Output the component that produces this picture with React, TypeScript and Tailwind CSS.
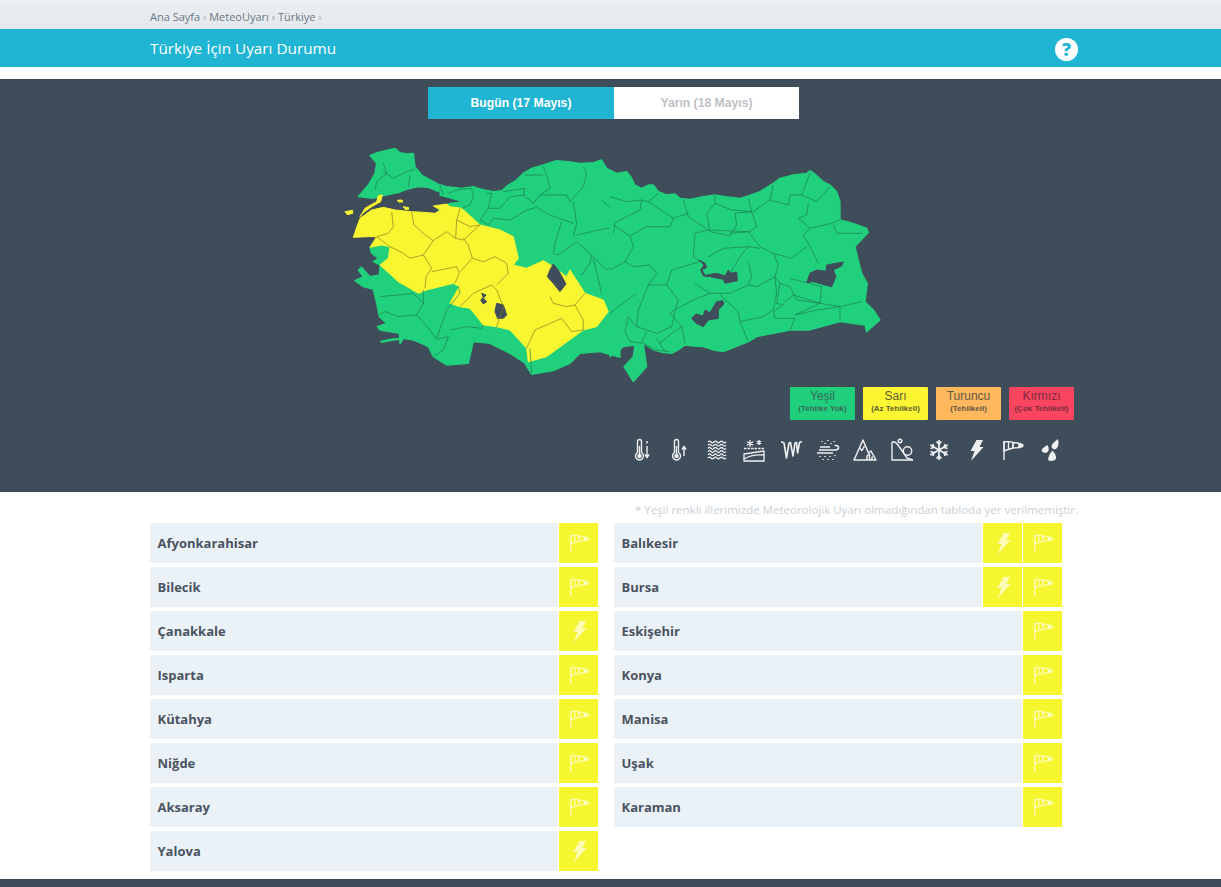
// Türkiye MeteoUyarı page
const LEFT = [
  { name: "Afyonkarahisar", icons: ["wind"] },
  { name: "Bilecik", icons: ["wind"] },
  { name: "Çanakkale", icons: ["bolt"] },
  { name: "Isparta", icons: ["wind"] },
  { name: "Kütahya", icons: ["wind"] },
  { name: "Niğde", icons: ["wind"] },
  { name: "Aksaray", icons: ["wind"] },
  { name: "Yalova", icons: ["bolt"] },
];

const RIGHT = [
  { name: "Balıkesir", icons: ["bolt", "wind"] },
  { name: "Bursa", icons: ["bolt", "wind"] },
  { name: "Eskişehir", icons: ["wind"] },
  { name: "Konya", icons: ["wind"] },
  { name: "Manisa", icons: ["wind"] },
  { name: "Uşak", icons: ["wind"] },
  { name: "Karaman", icons: ["wind"] },
];

// map paths use the 3x crop coordinates, the two groups below scale them back
const WEST_BORDERS_GREEN = [
  "M130,100 140,130 110,155 105,180",
  "M130,125 160,145 200,125 225,118",
  "M210,135 205,170",
  "M300,165 310,195",
  "M325,190 350,180 395,175 400,200 390,225 365,235",
  "M440,190 455,190 445,235 420,270 445,285 460,265 510,270 560,240 590,232 630,255 700,280",
  "M445,235 480,235 510,200 555,195",
  "M490,185 555,175 550,195 580,220 600,195 630,175 620,135 610,110",
  "M555,135 610,135",
  "M600,195 680,195 690,215 730,170 740,130 730,110",
  "M700,215 710,280 700,320",
  "M665,275 645,340 640,370 655,375 710,335 755,375 750,400 725,435",
  "M710,315 800,295 830,300",
  "M755,375 800,420 840,390",
  "M785,210 830,250 840,245",
  "M760,385 785,490",
  "M120,500 175,495 220,490 250,520 230,555 175,560 135,545 115,555",
  "M230,555 270,600 290,628 325,620",
  "M250,480 250,520",
  "M355,470 360,490 320,540 290,625",
  "M330,600 380,590 425,595 430,585",
  "M325,620 310,660 280,680",
  "M570,655 575,730",
];

const WEST_BORDERS_YELLOW = [
  "M155,245 160,290 145,310 110,320",
  "M215,245 222,285 250,310 280,332 320,305 347,325 350,270 360,235",
  "M110,320 150,350 190,370 210,385 250,375 280,332",
  "M250,375 275,415 258,440 255,475",
  "M347,325 370,330 420,285",
  "M350,270 390,290 420,285",
  "M370,325 385,345 397,385",
  "M275,425 350,410 358,430 345,460",
  "M397,385 360,425",
  "M397,385 430,395 465,380 500,400 505,430 470,465",
  "M360,530 400,490 455,465 470,480 490,530 470,590",
  "M560,655 585,600 620,585 665,565 695,605 730,600",
  "M630,500 640,520 680,530 705,525 735,490",
  "M705,525 730,570 730,600",
];

const EAST_BORDERS = [
  "M0,200 50,215 95,210 90,240 40,265 15,280 10,310",
  "M95,210 115,215 190,265 180,290 110,290 60,318 10,285",
  "M115,215 145,190",
  "M220,210 235,260 295,300",
  "M190,265 235,250",
  "M315,195 315,220 290,250 300,305 360,318 380,285 375,250 425,245 415,205",
  "M315,220 365,240 425,245 440,290 420,305 360,310",
  "M490,165 480,210 430,245",
  "M480,210 535,225 540,195 575,195 600,130",
  "M575,195 620,215 660,170",
  "M595,220 590,255 565,265 600,295 665,280 690,270",
  "M670,285 680,310 760,310",
  "M600,295 580,315 600,350 625,400",
  "M255,310 295,300 415,305 450,350 490,370 545,385 590,350",
  "M255,310 250,380 270,395",
  "M60,318 70,350 45,395 0,420",
  "M45,395 70,410 120,405 140,430 115,465 170,465 185,420 270,395",
  "M295,380 340,355 415,350 450,355",
  "M390,380 415,350",
  "M390,380 360,430",
  "M415,395 425,440 415,465 440,470 495,440 505,405 490,370",
  "M255,460 300,490 360,490 415,465",
  "M170,465 205,510 195,540 250,510 300,490",
  "M330,495 385,545 390,575 460,560 490,540 500,490 495,440",
  "M495,440 510,460 540,470 560,510 630,520 635,470 540,445",
  "M510,460 500,520 520,525 490,545 495,565 555,565 540,600",
  "M520,520 550,495 630,520 555,555 620,540 690,530 690,570",
  "M630,520 690,530 755,515",
  "M390,575 415,635",
  "M195,540 180,550 215,590 225,640",
  "M115,465 85,540 80,590 110,600 140,610 185,590 195,545",
  "M80,490 25,530 0,550",
  "M80,590 55,560 45,605 60,635 100,640 135,660 180,665",
  "M110,605 95,635",
  "M140,625 165,665",
  "M215,590 185,610 150,640",
];

const GREEN = "#20d07c";
const YELLOW = "#f9f530";
const DARK = "#3f4c5a";

function TurkeyMap() {
  return (
    <svg viewBox="340 130 550 255" className="ml-[340px] mt-[11px] block h-[255px] w-[550px]">
      <g transform="translate(340,130) scale(0.3333)">
        <g fill={GREEN} stroke={GREEN} strokeWidth="4" strokeLinejoin="round">
          <path d="M90,77 L112,68 135,62 165,55 180,68 200,72 220,70 225,110 245,135 272,150 300,165 296,185 265,172 235,170 200,178 175,188 130,197 100,205 55,200 70,182 85,165 105,130 110,100Z" />
          <path d="M302,165 320,170 340,172 365,175 400,170 425,178 460,185 485,182 505,165 530,150 550,130 575,115 610,105 650,92 690,96 720,100 760,98 785,90 800,115 840,135 840,682 780,665 720,670 690,700 640,722 575,733 555,700 510,670 450,640 400,635 385,700 320,705 280,680 265,650 220,630 190,625 180,642 178,610 120,600 112,590 140,580 118,560 110,520 100,478 70,470 45,452 70,440 55,420 65,412 90,440 118,435 120,405 100,395 115,385 95,370 90,352 125,345 200,300 300,245 295,235 330,220 370,215 300,195Z" />
          <path d="M122,634 150,628 176,625 176,628 150,632 125,637Z" />
        </g>
        <g fill={YELLOW} stroke={YELLOW} strokeWidth="3" strokeLinejoin="round">
          <path d="M40,322 50,292 60,265 95,240 130,232 165,240 215,245 250,247 285,250 302,240 280,228 320,222 330,230 365,235 395,262 420,285 480,300 520,320 535,385 520,405 560,415 610,392 640,410 680,440 690,420 735,490 790,510 805,545 770,590 730,600 620,680 565,695 560,655 510,600 470,590 430,585 390,535 360,530 330,520 358,470 340,460 260,480 235,490 175,455 120,405 145,385 150,350 125,345 90,352 110,320 85,320Z" />
          <path d="M60,260 75,235 110,215 115,197 127,195 122,215 95,230 68,250Z" />
          <path d="M15,245 38,241 38,250 22,254Z" />
          <path d="M172,211 186,210 188,216 176,216Z" />
          <path d="M190,230 206,233 206,238 196,238Z" />
        </g>
        <g fill={DARK} stroke={DARK} strokeWidth="3" strokeLinejoin="round">
          <path d="M640,402 655,420 678,462 660,485 640,460 622,440 630,420Z" />
          <path d="M470,520 490,525 500,555 490,565 473,565 465,545Z" />
          <path d="M425,490 438,495 430,505 440,515 430,522 422,510 430,502Z" />
        </g>
        <g fill="none" stroke="#1d7a50" strokeWidth="2" strokeLinejoin="round">
          {WEST_BORDERS_GREEN.map((d) => (
            <path key={d} d={d} />
          ))}
        </g>
        <g fill="none" stroke="#7d7d22" strokeWidth="2" strokeLinejoin="round">
          {WEST_BORDERS_YELLOW.map((d) => (
            <path key={d} d={d} />
          ))}
        </g>
      </g>
      <g transform="translate(610,130) scale(0.3333)">
        <path
          fill={GREEN}
          stroke={GREEN}
          strokeWidth="4"
          strokeLinejoin="round"
          d="M0,130 20,130 50,125 62,140 75,165 95,175 115,165 130,165 145,185 170,195 195,192 210,205 240,208 280,200 315,195 345,200 390,205 415,198 450,185 490,160 510,145 550,135 590,130 600,122 612,130 640,155 660,165 680,185 690,215 690,270 730,280 770,295 775,308 735,350 755,430 772,460 765,515 790,540 810,570 770,605 765,585 690,575 600,600 540,600 440,620 415,635 340,665 310,660 280,650 250,648 225,645 205,660 185,670 160,668 130,660 100,640 110,710 70,755 42,710 70,680 75,645 40,650 0,680Z"
        />
        <g fill="none" stroke="#1d7a50" strokeWidth="2" strokeLinejoin="round">
          {EAST_BORDERS.map((d) => (
            <path key={d} d={d} />
          ))}
        </g>
        <g fill={DARK} stroke={DARK} strokeWidth="3" strokeLinejoin="round">
          <path d="M590,458 600,430 620,420 648,424 650,405 700,396 695,408 670,420 678,440 665,470 645,465 610,455Z" />
          <path d="M245,565 258,552 280,558 285,540 300,548 320,515 338,512 342,522 325,540 325,565 295,570 280,590 258,580Z" />
          <path d="M268,390 285,400 290,412 276,420 285,436 320,430 345,438 355,420 360,430 380,426 382,452 345,460 340,448 300,440 280,438 272,420 282,405Z" />
        </g>
      </g>
    </svg>
  );
}

function WindIcon({ className }: { className?: string }) {
  return (
    <svg viewBox="0 0 24 24" className={className} fill="none" stroke="currentColor" strokeWidth="1.4" strokeLinejoin="round">
      <path d="M3 3V22" />
      <path d="M3 4Q8 3 12 4.5V10Q8 11 3 13Z" />
      <path d="M7.5 4V11" />
      <path d="M12 4.8Q17 4.5 18 5.5V9.5Q15 10 12 10Z" />
      <path d="M18 5.5Q22 6 22 7.5T18 9.5Z" fill="currentColor" />
    </svg>
  );
}

function BoltIcon({ className }: { className?: string }) {
  return (
    <svg viewBox="0 0 24 24" className={className} fill="currentColor">
      <path d="M12.5 2H19L15.5 9H19.5L7 23L10.5 13H6.5Z" />
    </svg>
  );
}

function Thermo({ up }: { up?: boolean }) {
  return (
    <svg viewBox="0 0 24 24" className="h-[24px] w-[24px]" fill="none" stroke="currentColor" strokeWidth="1.4">
      <path d="M6.5 3.5A2 2 0 0 1 10.5 3.5V14.5A4 4 0 1 1 6.5 14.5Z" />
      <circle cx="8.5" cy="18" r="1.6" fill="currentColor" />
      <path d="M8.5 8V17" />
      {up ? <path d="M16 18V9M14 11.5L16 8.5L18 11.5" /> : <path d="M16 8V19M14 16.5L16 19.5L18 16.5M16 3V5.5" />}
    </svg>
  );
}

const WAVE = "q1.5 -1.8 3 0t3 0t3 0t3 0t3 0t3 0";

function Waves() {
  return (
    <svg viewBox="0 0 24 24" className="h-[24px] w-[24px]" fill="none" stroke="currentColor" strokeWidth="1.3">
      {[4, 7.2, 10.4, 13.6, 16.8, 20].map((y) => (
        <path key={y} d={`M3 ${y}${WAVE}`} />
      ))}
    </svg>
  );
}

function SnowField() {
  return (
    <svg viewBox="0 0 24 24" className="h-[24px] w-[24px]" fill="none" stroke="currentColor" strokeWidth="1.3">
      <path d="M8 2V9M4.8 3.8L11.2 7.2M11.2 3.8L4.8 7.2" />
      <path d="M17 2V7M14.8 3.2L19.2 5.8M19.2 3.2L14.8 5.8" />
      <path d="M2 10.5H22" strokeDasharray="2.5 1" />
      <path d="M2 16L22 13V23H2Z" />
      <path d="M2 21Q10 16 22 17" />
    </svg>
  );
}

function Icicles() {
  return (
    <svg viewBox="0 0 24 24" className="h-[24px] w-[24px]" fill="none" stroke="currentColor" strokeWidth="1.6" strokeLinejoin="round">
      <path d="M2 4Q4 4 5 5L7.5 20L10 5L11.5 4.5L14 18L16 5L17.5 4.5L18.5 15L20.5 4.5L23 3.5" />
    </svg>
  );
}

function FogDust() {
  return (
    <svg viewBox="0 0 24 24" className="h-[24px] w-[24px]" fill="none" stroke="currentColor" strokeWidth="1.5">
      <path d="M3 12H19Q22.5 12 22.5 9.5T18.5 7.5" />
      <path d="M1 15H17" />
      <path d="M4 9H14" />
      <path d="M6 3V4M12 2V3M18 3V4M9 5V6M15 5V6M4 18V19M9 18V19M14 18V19M19 17V18M7 21V22M12 21V22M17 21V22" />
    </svg>
  );
}

function Avalanche() {
  return (
    <svg viewBox="0 0 24 24" className="h-[24px] w-[24px]" fill="none" stroke="currentColor" strokeWidth="1.5" strokeLinejoin="round">
      <path d="M1 22H23L18 13L15.5 15L10 2L1 22Z" />
      <path d="M6.5 10L9 12.5L11.5 8" />
      <path d="M14 22V18L16.5 16L16.5 22M18.5 22L19.5 18.5" />
    </svg>
  );
}

function Rockfall() {
  return (
    <svg viewBox="0 0 24 24" className="h-[24px] w-[24px]" fill="none" stroke="currentColor" strokeWidth="1.4" strokeLinejoin="round">
      <path d="M2 4V22H23" />
      <path d="M2 4Q5 3 8 7L17 20L23 22" />
      <circle cx="17.5" cy="13" r="4.2" />
      <circle cx="10" cy="3" r="1.8" />
    </svg>
  );
}

function Flake() {
  return (
    <svg viewBox="0 0 24 24" className="h-[24px] w-[24px]" fill="none" stroke="currentColor" strokeWidth="1.7">
      <path d="M12 2V22M3.3 7L20.7 17M20.7 7L3.3 17" />
      <path d="M9.5 3.5L12 6L14.5 3.5M9.5 20.5L12 18L14.5 20.5M3.5 10.5L6.8 9.5L6 6M20.5 13.5L17.2 14.5L18 18M20.5 10.5L17.2 9.5L18 6M3.5 13.5L6.8 14.5L6 18" />
    </svg>
  );
}

function Drops() {
  return (
    <svg viewBox="0 0 24 24" className="h-[24px] w-[24px]" fill="currentColor">
      <path d="M20 1Q21.5 8 18.5 10.5T13.5 9Q13 6 20 1Z" />
      <path d="M9.5 7Q12 12 9.5 14T4 13.5Q2 11 9.5 7Z" />
      <path d="M14.5 12.5Q19 18 18 20.5T13 23T10.5 19.5Q11 16 14.5 12.5Z" />
    </svg>
  );
}

function QuestionBadge() {
  return (
    <span className="flex h-[23px] w-[23px] items-center justify-center rounded-full bg-white font-['Open_Sans',sans-serif] text-[18px] leading-none font-extrabold text-[#1fb5d3]">
      ?
    </span>
  );
}

const LEGEND = [
  { title: "Yeşil", sub: "(Tehlike Yok)", cls: "bg-[#20cf7b] text-[#3a6a58]" },
  { title: "Sarı", sub: "(Az Tehlikeli)", cls: "bg-[#fdf632] text-[#5c5c30]" },
  { title: "Turuncu", sub: "(Tehlikeli)", cls: "bg-[#ffb95c] text-[#5f5648]" },
  { title: "Kırmızı", sub: "(Çok Tehlikeli)", cls: "bg-[#f9455f] text-[#7a2c3c]" },
];

function Row({ name, icons }: { name: string; icons: string[] }) {
  return (
    <div className="flex h-[40px] gap-[1px]">
      <div className="flex flex-1 items-center bg-[#ebf2f7] pl-[7.5px] pt-[2px] text-[13px] font-bold text-[#4a5361]">{name}</div>
      {icons.map((icon) => (
        <div key={icon} className="flex w-[39px] items-center justify-center bg-[#f5f630] text-[#fcfcb4]">
          {icon === "wind" ? <WindIcon className="h-[22px] w-[22px]" /> : <BoltIcon className="h-[24px] w-[24px]" />}
        </div>
      ))}
    </div>
  );
}

export default function App() {
  return (
    <div className="min-h-[887px] overflow-hidden bg-white font-['Open_Sans',sans-serif]">
      <div className="h-[29px] border-t border-[#f0f3f5] bg-gradient-to-b from-[#eaeef1] to-[#e3e9ed] pl-[150px] pt-[9px] text-[11px] leading-[14px] text-[#6c7883]">
        Ana Sayfa <span className="text-[#aab3ba]">›</span> MeteoUyarı <span className="text-[#8a949d]">›</span> Türkiye{" "}
        <span className="text-[#aab3ba]">›</span>
      </div>
      <div className="flex h-[38px] items-center justify-between bg-[#1fb5d3] pl-[150px] pr-[143px] text-[15.3px] text-white">
        <span>Türkiye İçin Uyarı Durumu</span>
        <span className="pt-[2px]">
          <QuestionBadge />
        </span>
      </div>
      <div className="mt-[12px] h-[413px] bg-[#3f4c5a] pt-[8px] font-['Liberation_Sans',sans-serif]">
        <div className="ml-[428px] flex h-[32px] w-[371px] text-[12.2px] font-bold">
          <div className="flex w-[186px] items-center justify-center bg-[#1fb5d3] text-white">Bugün (17 Mayıs)</div>
          <div className="flex flex-1 items-center justify-center bg-white text-[#bcc1c6]">Yarın (18 Mayıs)</div>
        </div>
        <TurkeyMap />
        <div className="ml-[790px] mt-[2px] flex w-[284px] gap-[8px]">
          {LEGEND.map((l) => (
            <div key={l.title} className={`flex h-[33px] w-[65px] flex-col items-center rounded-[1px] pt-[2px] ${l.cls}`}>
              <span className="text-[12px] leading-[14px]">{l.title}</span>
              <span className="mt-[1px] text-[8px] leading-[10px] font-bold whitespace-nowrap">{l.sub}</span>
            </div>
          ))}
        </div>
        <div className="ml-[624px] mt-[18px] flex text-[#eef0f2]">
          {[
            <Thermo key="cold" />,
            <Thermo key="hot" up />,
            <Waves key="waves" />,
            <SnowField key="field" />,
            <Icicles key="ice" />,
            <FogDust key="fog" />,
            <Avalanche key="avalanche" />,
            <Rockfall key="rock" />,
            <Flake key="flake" />,
            <BoltIcon key="bolt" className="h-[24px] w-[24px]" />,
            <WindIcon key="wind" className="h-[24px] w-[24px]" />,
            <Drops key="drops" />,
          ].map((icon, i) => (
            <div key={i} className="flex h-[24px] w-[37px] items-center justify-center">
              {icon}
            </div>
          ))}
        </div>
      </div>
      <div className="ml-[150px] w-[928px]">
        <p className="h-[31px] pt-[10px] text-right text-[11.5px] leading-[16px] text-[#c9cfd5]">
          * Yeşil renkli illerimizde Meteorolojik Uyarı olmadığından tabloda yer verilmemiştir.
        </p>
        <div className="grid grid-cols-[448px_448px] items-start gap-x-[16px]">
          <div className="flex flex-col gap-[4px]">
            {LEFT.map((r) => (
              <Row key={r.name} {...r} />
            ))}
          </div>
          <div className="flex flex-col gap-[4px]">
            {RIGHT.map((r) => (
              <Row key={r.name} {...r} />
            ))}
          </div>
        </div>
      </div>
      <div className="mt-[8px] h-[8px] bg-[#3f4c5a]" />
    </div>
  );
}
